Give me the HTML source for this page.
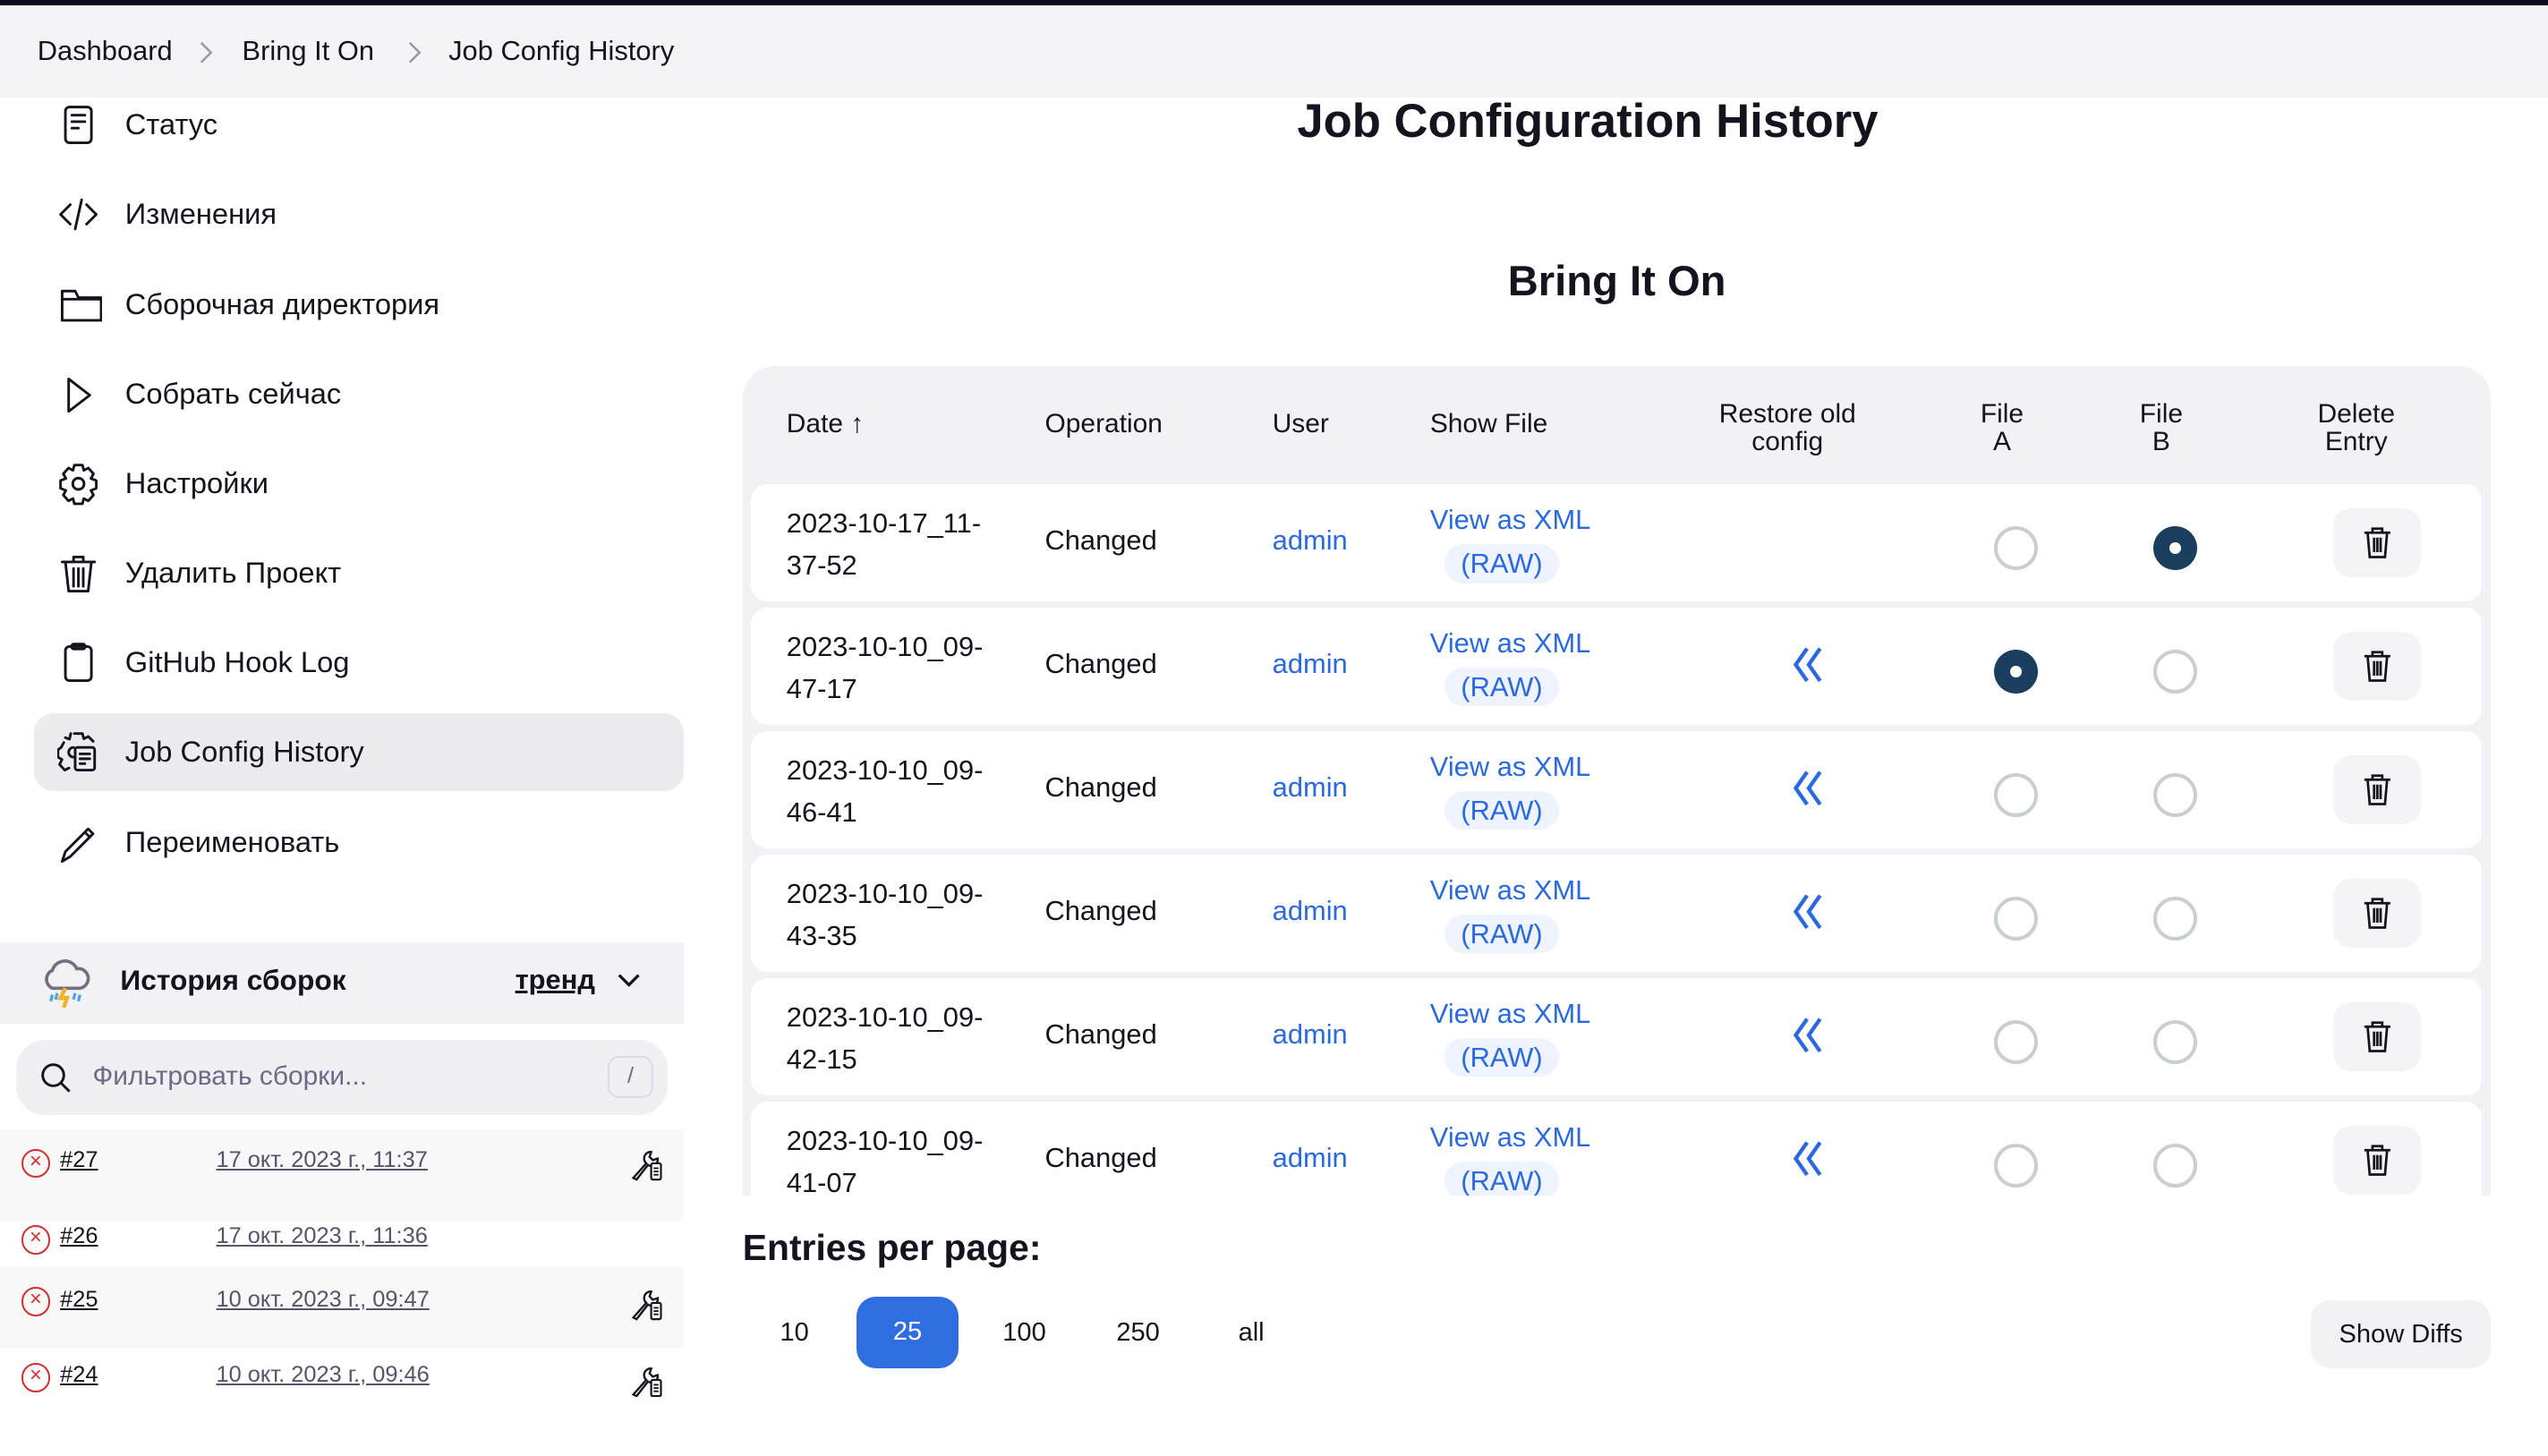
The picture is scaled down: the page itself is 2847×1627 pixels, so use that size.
<!DOCTYPE html>
<html><head><meta charset="utf-8">
<style>
html{zoom:1.8157}
*{box-sizing:border-box;margin:0;padding:0}
body{width:1568px;height:855px;overflow:hidden;background:#fff;font-family:"Liberation Sans","DejaVu Sans",sans-serif;color:#14141f;position:relative}
.abs{position:absolute}
.top{left:0;top:0;width:1568px;height:3.3px;background:#0d0c1d}
.bc{left:0;top:3.3px;width:1568px;height:56.7px;background:#f4f4f6;font-size:17px}
.bc span{position:absolute;top:18px}
.bc svg{position:absolute;top:22px}
.nav{left:0;font-size:18px}
.nav svg{position:absolute;left:35px;width:26px;height:26px;fill:none;stroke:#14141f;stroke-width:1.6;stroke-linecap:round;stroke-linejoin:round}
.item{position:absolute;left:0;width:421px;height:48px}
.item .t{position:absolute;left:77px;top:13px}
.item svg{top:11px}
.active{background:#ebebf0;left:21px!important;width:400px!important;border-radius:12px}
.active .t{left:56px}
.active svg{left:14px!important}
.hist{left:0;top:580px;width:421px;height:50px;background:#f2f2f6}
.search{left:10px;top:640px;width:401px;height:46px;background:#efeff4;border-radius:18px}
.brow{left:0;width:421px;font-size:14px}
.brow .n{position:absolute;left:37px;text-decoration:underline;color:#14141f}
.brow .d{position:absolute;left:133px;text-decoration:underline;color:#55556a}
.x{position:absolute;left:13px;width:18px;height:18px;border:1.6px solid #d32f2f;border-radius:50%;color:#d32f2f;font-size:13px;line-height:14px;text-align:center}
.wr{position:absolute;left:388px}
h1{position:absolute;left:700px;width:554px;text-align:center;top:58px;font-size:29px;font-weight:bold}
h2{position:absolute;left:800px;width:390px;text-align:center;top:158px;font-size:26px;font-weight:bold}
.tbl{left:457px;top:225px;width:1076px;height:560px;background:#f2f2f6;border-radius:20px}
.th{position:absolute;font-size:16.5px;line-height:17px;text-align:center}
.row{position:absolute;left:462px;width:1065px;height:72px;background:#fff;border-radius:10px;font-size:17px}
.row .date{position:absolute;left:22px;top:11px;line-height:26px}
.row .op{position:absolute;left:181px;top:25px}
.row .us{position:absolute;left:321px;top:25px;color:#2a6ade}
.row .vx{position:absolute;left:418px;top:12px;color:#2a6ade}
.row .raw{position:absolute;left:427px;top:37px;padding:2px 10px;background:#eef3fd;border-radius:12px;color:#2a6ade}
.rad{position:absolute;top:26px;width:27px;height:27px;border-radius:50%;border:2.5px solid #c8ced2}
.rad.on{border:none;background:#1b3d5e}
.rad.on:after{content:"";position:absolute;left:10px;top:10px;width:7px;height:7px;border-radius:50%;background:#fff}
.del{position:absolute;left:974px;top:15px;width:54px;height:42px;background:#f4f4f6;border-radius:11px}
.del svg,.rs{position:absolute}
.bottom{left:421px;top:736px;width:1147px;height:160px;background:linear-gradient(#fffffff2,#fff 20px)}
.pg{position:absolute;top:811px;font-size:16px}
</style></head><body>
<div class="abs top"></div>
<div class="abs bc">
<span style="left:23px">Dashboard</span><svg style="left:123px" width="8" height="14" viewBox="0 0 8 14"><path d="M1 1l6 6-6 6" fill="none" stroke="#9a9aa6" stroke-width="1.4"/></svg>
<span style="left:149px">Bring It On</span><svg style="left:251px" width="8" height="14" viewBox="0 0 8 14"><path d="M1 1l6 6-6 6" fill="none" stroke="#9a9aa6" stroke-width="1.4"/></svg>
<span style="left:276px">Job Config History</span>
</div>

<div class="abs nav" style="top:0">
<div class="item" style="top:53px"><svg viewBox="0 0 26 26"><rect x="5" y="2" width="16" height="22" rx="2.5"/><path d="M9 7h8M9 11h8M9 15h4"/></svg><span class="t">Статус</span></div>
<div class="item" style="top:108px"><svg viewBox="0 0 26 26"><path d="M8 7l-6 6 6 6M18 7l6 6-6 6M15 4l-4 18"/></svg><span class="t">Изменения</span></div>
<div class="item" style="top:164px"><svg viewBox="0 0 26 26" style="width:28px"><path d="M2 4v18h24V8H12l-2-4H3zM2 9h24"/></svg><span class="t">Сборочная директория</span></div>
<div class="item" style="top:219px"><svg viewBox="0 0 26 26"><path d="M7 3l13 10-13 10z"/></svg><span class="t">Собрать сейчас</span></div>
<div class="item" style="top:274px"><svg viewBox="0 0 26 26"><circle cx="13" cy="13" r="3.5"/><path d="M10.5 1.5h5l.8 3.2 2.8-1.4 3.2 3.6-1.6 2.8 3.3 1.3v4.8l-3.3 1.3 1.6 2.8-3.2 3.6-2.8-1.4-.8 3.2h-5l-.8-3.2-2.8 1.4-3.2-3.6 1.6-2.8-3.3-1.3V11l3.3-1.3-1.6-2.8 3.2-3.6 2.8 1.4z"/></svg><span class="t">Настройки</span></div>
<div class="item" style="top:329px"><svg viewBox="0 0 26 26"><path d="M3 6h20M10 6V3h6v3M5 6l2 18h12l2-18M10 10v11M13 10v11M16 10v11"/></svg><span class="t">Удалить Проект</span></div>
<div class="item" style="top:384px"><svg viewBox="0 0 26 26"><rect x="5" y="3" width="16" height="21" rx="2.5"/><rect x="9" y="1.5" width="8" height="3" rx="1"/></svg><span class="t">GitHub Hook Log</span></div>
<div class="item active" style="top:439px"><svg viewBox="0 0 26 26"><path d="M10 10a3 3 0 0 0 0 6M10.5 1.5h5l.8 3.2 2.8-1.4 3 3M5 4l2.5 1 .8-3.5M4 7l-1.6 3-2 1.5v4.5l2.5 1.5-1.5 3 3.2 3.5 2.6-1.3"/><rect x="11" y="10" width="12" height="14" rx="1.5"/><path d="M14 14h6M14 17h6M14 20h3"/></svg><span class="t">Job Config History</span></div>
<div class="item" style="top:495px"><svg viewBox="0 0 26 26"><path d="M3 24l2-6L19 4l3 3L8 21zM17 6l3 3"/></svg><span class="t">Переименовать</span></div>
</div>

<div class="abs hist">
<svg class="abs" style="left:24px;top:8px" width="32" height="34" viewBox="0 0 32 34"><path d="M8 20a6 6 0 0 1 0-11 8 8 0 0 1 15-1 6 6 0 0 1 2 12z" fill="none" stroke="#70707e" stroke-width="2"/><path d="M16 20l-3 6h4l-2 6" stroke="#f0b429" stroke-width="2.5" fill="none"/><path d="M8 24l-1 4M11 23l-1 4M22 23l-1 4M25 24l-1 4" stroke="#4da3e8" stroke-width="1.8"/></svg>
<span class="abs" style="left:74px;top:13px;font-size:17.5px;font-weight:bold">История сборок</span>
<span class="abs" style="left:317px;top:13px;font-size:17px;font-weight:bold;text-decoration:underline">тренд</span>
<svg class="abs" style="left:380px;top:18px" width="14" height="10" viewBox="0 0 14 10"><path d="M1 2l6 6 6-6" fill="none" stroke="#14141f" stroke-width="1.8"/></svg>
</div>
<div class="abs search">
<svg class="abs" style="left:15px;top:14px" width="20" height="20" viewBox="0 0 20 20"><circle cx="8" cy="8" r="6.5" fill="none" stroke="#14141f" stroke-width="1.6"/><path d="M13 13l5 5" stroke="#14141f" stroke-width="1.6"/></svg>
<span class="abs" style="left:47px;top:13px;font-size:16.5px;color:#6b6b85">Фильтровать сборки...</span>
<span class="abs" style="left:364px;top:10px;width:28px;height:26px;border:1.5px solid #dcdce6;border-radius:7px;font-size:14px;color:#6b6b85;text-align:center;line-height:23px">/</span>
</div>
<svg width="0" height="0" style="position:absolute"><defs><symbol id="w" viewBox="0 0 20 22"><path d="M2 20l8-9a4 4 0 0 1 3-7l-1 3 2 2 3-1a4 4 0 0 1-6 4l-7 9z" fill="none" stroke="#14141f" stroke-width="1.3"/><rect x="13" y="11" width="6" height="10" rx="1" fill="#fff" stroke="#14141f" stroke-width="1.2"/><path d="M14.5 14h3M14.5 16h3M14.5 18h3" stroke="#14141f" stroke-width="1"/></symbol></defs></svg>
<div class="abs brow" style="top:695px;height:57px;background:#f8f8f8"><div class="x" style="top:12px">×</div><span class="n" style="top:11px">#27</span><span class="d" style="top:11px">17 окт. 2023 г., 11:37</span><svg class="wr" style="top:10px" width="20" height="22"><use href="#w"/></svg></div>
<div class="abs brow" style="top:752px;height:28px"><div class="x" style="top:2px">×</div><span class="n" style="top:1px">#26</span><span class="d" style="top:1px">17 окт. 2023 г., 11:36</span></div>
<div class="abs brow" style="top:780px;height:50px;background:#f8f8f8"><div class="x" style="top:12px">×</div><span class="n" style="top:12px">#25</span><span class="d" style="top:12px">10 окт. 2023 г., 09:47</span><svg class="wr" style="top:11px" width="20" height="22"><use href="#w"/></svg></div>
<div class="abs brow" style="top:830px;height:30px"><div class="x" style="top:9px">×</div><span class="n" style="top:8px">#24</span><span class="d" style="top:8px">10 окт. 2023 г., 09:46</span><svg class="wr" style="top:8px" width="20" height="22"><use href="#w"/></svg></div>

<h1>Job Configuration History</h1>
<h2>Bring It On</h2>

<div class="abs tbl"></div>
<div class="th" style="left:484px;top:253px">Date &uarr;</div>
<div class="th" style="left:643px;top:253px">Operation</div>
<div class="th" style="left:783px;top:253px">User</div>
<div class="th" style="left:880px;top:253px">Show File</div>
<div class="th" style="left:1040px;width:120px;top:247px">Restore old<br>config</div>
<div class="th" style="left:1202px;width:60px;top:247px">File<br>A</div>
<div class="th" style="left:1300px;width:60px;top:247px">File<br>B</div>
<div class="th" style="left:1410px;width:80px;top:247px">Delete<br>Entry</div>

<div id="rows"></div>
<script>
var d=[["2023-10-17_11-","37-52",0,0,1],["2023-10-10_09-","47-17",1,1,0],["2023-10-10_09-","46-41",1,0,0],["2023-10-10_09-","43-35",1,0,0],["2023-10-10_09-","42-15",1,0,0],["2023-10-10_09-","41-07",1,0,0]];
var h="";
d.forEach(function(r,i){
h+='<div class="row" style="top:'+(298+i*76)+'px"><div class="date">'+r[0]+'<br>'+r[1]+'</div><div class="op">Changed</div><div class="us">admin</div><div class="vx">View as XML</div><div class="raw">(RAW)</div>'+
(r[2]?'<svg class="rs" style="left:640px;top:23px" width="22" height="24" viewBox="0 0 22 24"><path d="M10 2L3 12l7 10M18 2l-7 10 7 10" fill="none" stroke="#2a6ade" stroke-width="2.4"/></svg>':'')+
'<div class="rad'+(r[3]?' on':'')+'" style="left:765px"></div><div class="rad'+(r[4]?' on':'')+'" style="left:863px"></div>'+
'<div class="del"><svg style="left:18px;top:11px" width="18" height="20" viewBox="0 0 18 20"><path d="M1 4h16M6 4V1.5h6V4M3 4l1.3 15h9.4L15 4M7 7v9M9 7v9M11 7v9" fill="none" stroke="#14141f" stroke-width="1.5"/></svg></div></div>';});
document.getElementById("rows").innerHTML=h;
</script>

<div class="abs bottom"></div>
<div class="abs" style="left:457px;top:755px;font-size:22.5px;font-weight:bold">Entries per page:</div>
<span class="pg" style="left:480px">10</span>
<div class="abs" style="left:527px;top:798px;width:63px;height:44px;background:#2f6ee0;border-radius:12px;color:#fff;font-size:16px;text-align:center;line-height:44px">25</div>
<span class="pg" style="left:617px">100</span>
<span class="pg" style="left:687px">250</span>
<span class="pg" style="left:762px">all</span>
<div class="abs" style="left:1422px;top:800px;width:111px;height:42px;background:#f2f2f6;border-radius:12px;font-size:16px;text-align:center;line-height:42px">Show Diffs</div>
</body></html>
